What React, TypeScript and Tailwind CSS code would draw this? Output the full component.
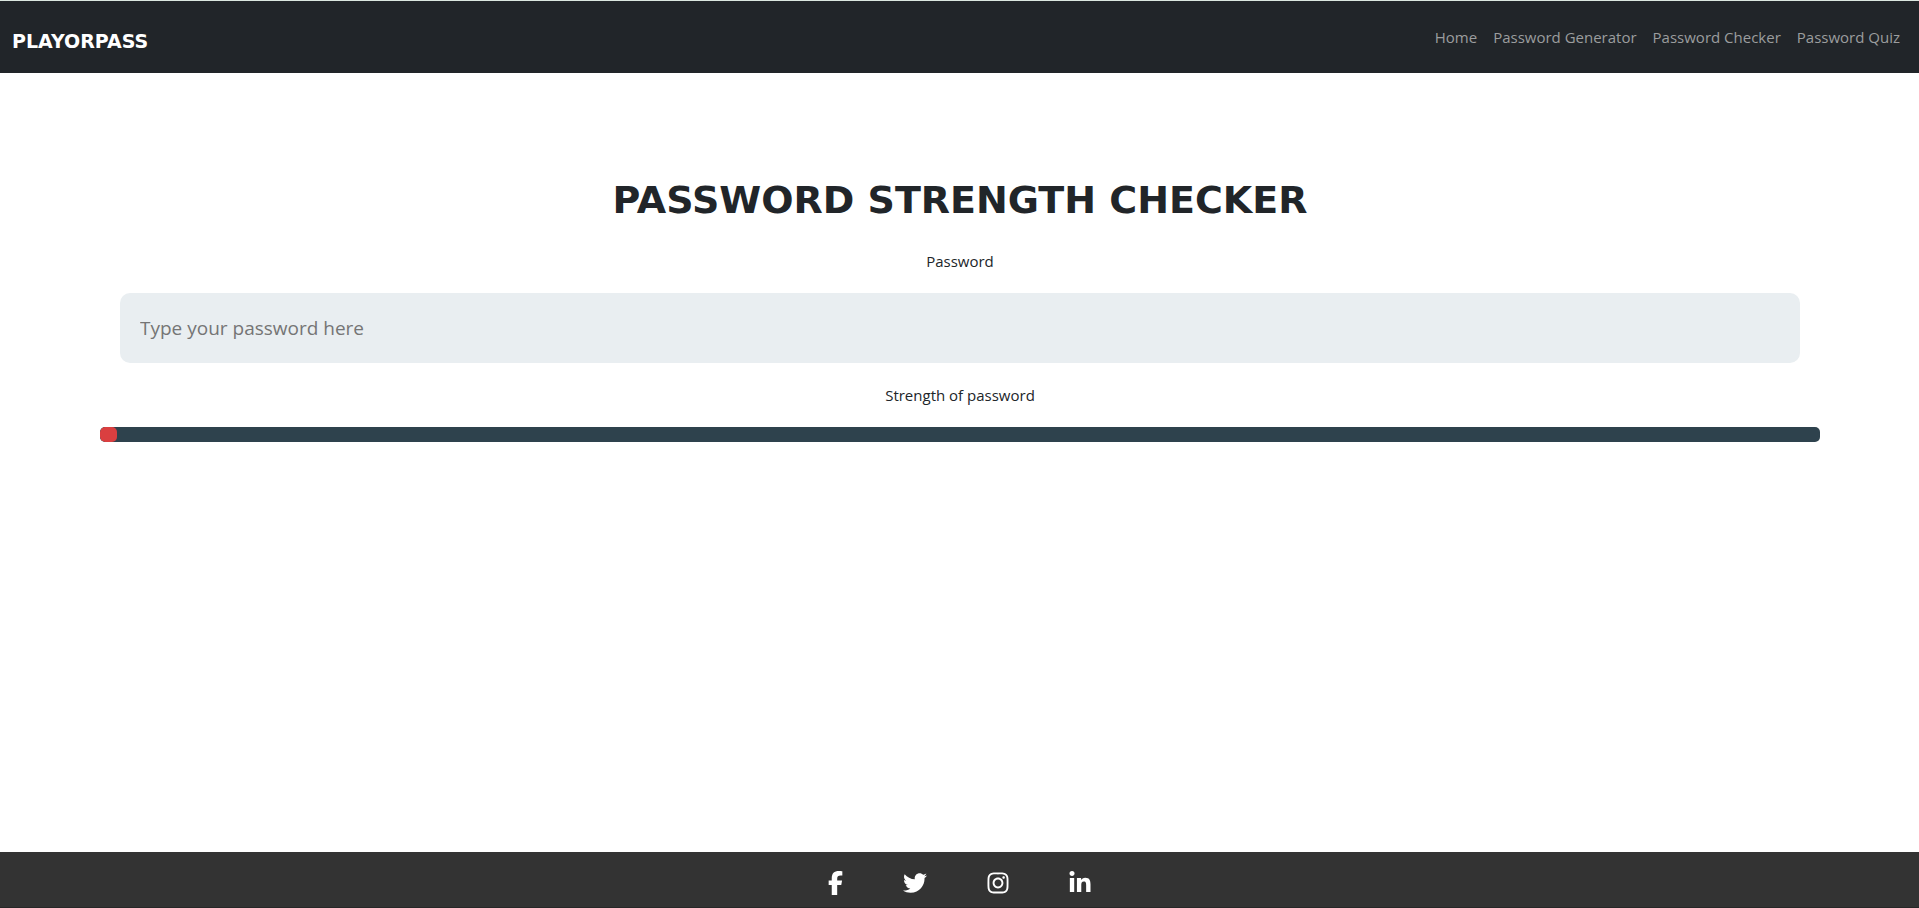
import { useState } from "react";
import { FaInstagram, FaLinkedinIn, FaTwitter } from "react-icons/fa";
import { FaFacebookF } from "react-icons/fa6";

const navLinks = ["Home", "Password Generator", "Password Checker", "Password Quiz"];

const socials = [
  { name: "Facebook", Icon: FaFacebookF, size: "w-[15px]" },
  { name: "Twitter", Icon: FaTwitter, size: "w-6" },
  { name: "Instagram", Icon: FaInstagram, size: "w-[22px]" },
  { name: "LinkedIn", Icon: FaLinkedinIn, size: "w-[22px]" },
];

function strengthOf(password: string) {
  const rules = [/.{8,}/, /[a-z]/, /[A-Z]/, /[0-9]/, /[^A-Za-z0-9]/];
  return Math.max(1, rules.filter((rule) => rule.test(password)).length * 20);
}

function Header() {
  return (
    <header className="flex items-center justify-between border-t border-[#dbe7e0] bg-[#212529] py-4 pr-[11px] pl-3">
      <a href="#" className="pt-2 font-['DejaVu_Sans',sans-serif] text-[19px] leading-8 font-bold text-white">
        PLAYORPASS
      </a>
      <nav className="flex">
        {navLinks.map((label) => (
          <a key={label} href="#" className="px-2 text-[15px] leading-6 text-[#9b9d9e]">
            {label}
          </a>
        ))}
      </nav>
    </header>
  );
}

export default function App() {
  const [password, setPassword] = useState("");
  const strength = strengthOf(password);

  return (
    <div className="flex min-h-screen flex-col bg-white font-['Open_Sans','Noto_Sans',sans-serif] text-[#212529]">
      <Header />
      <main className="flex grow flex-col pt-[100px] pr-[99px] pl-[100px] text-center">
        <h1 className="font-['DejaVu_Sans',sans-serif] text-[38px] leading-[54px] font-bold">
          PASSWORD STRENGTH CHECKER
        </h1>
        <label htmlFor="password" className="mt-[22px] text-[15px] leading-6">
          Password
        </label>
        <input
          id="password"
          type="password"
          value={password}
          onChange={(event) => setPassword(event.target.value)}
          placeholder="Type your password here"
          className="mx-5 mt-5 h-[70px] rounded-[10px] bg-[#e9eef1] px-5 text-[19px] outline-none placeholder:text-[#757575]"
        />
        <p id="strength-label" className="mt-5 text-[15px] leading-6">
          Strength of password
        </p>
        <div
          role="progressbar"
          aria-labelledby="strength-label"
          aria-valuenow={strength}
          className="mt-5 h-[15px] overflow-hidden rounded-[5px] bg-[#2e424d]"
        >
          <div className="h-full rounded-[5px] bg-[#da3f40]" style={{ width: `${strength}%` }} />
        </div>
      </main>
      <footer className="flex h-14 items-center justify-center gap-[60px] border-b border-[#272727] bg-[#333333] pt-[7px] text-white">
        {socials.map(({ name, Icon, size }) => (
          <a key={name} href="#" aria-label={name}>
            <Icon className={`h-6 ${size}`} />
          </a>
        ))}
      </footer>
    </div>
  );
}
